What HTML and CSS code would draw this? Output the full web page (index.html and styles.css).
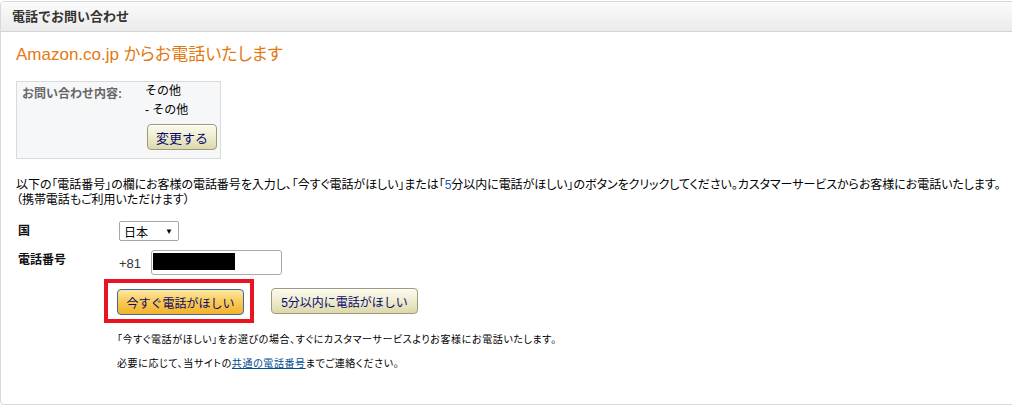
FILE: index.html
```html
<!DOCTYPE html>
<html lang="ja">
<head>
    <meta charset="UTF-8">
    <title>電話でお問い合わせ</title>
    <link rel="stylesheet" href="styles.css">
</head>
<body>
    <div class="box">
        <!-- ヘッダー -->
        <div class="box-header">電話でお問い合わせ</div>

        <div class="box-body">
            <h1 class="title">Amazon.co.jp からお電話いたします</h1>

            <!-- お問い合わせ内容 -->
            <div class="inquiry">
                <div class="inquiry-label">お問い合わせ内容:</div>
                <div class="inquiry-value">
                    <div class="value-line">その他</div>
                    <div class="value-line">- その他</div>
                    <button class="btn btn-cream btn-change">変更する</button>
                </div>
            </div>

            <p class="intro">以下の「電話番号」の欄にお客様の電話番号を入力し、「今すぐ電話がほしい」または「<span class="num">5</span>分以内に電話がほしい」のボタンをクリックしてください。カスタマーサービスからお客様にお電話いたします。<br>（携帯電話もご利用いただけます）</p>

            <!-- 入力フォーム -->
            <div class="form-row row-country">
                <div class="form-label">国</div>
                <div class="form-field">
                    <div class="select">日本<span class="arrow">▼</span></div>
                </div>
            </div>
            <div class="form-row row-phone">
                <div class="form-label">電話番号</div>
                <div class="form-field phone-field">
                    <span class="prefix">+81</span>
                    <div class="phone-input"><span class="redact"></span></div>
                </div>
            </div>

            <div class="buttons">
                <div class="highlight">
                    <button class="btn btn-yellow">今すぐ電話がほしい</button>
                </div>
                <button class="btn btn-cream btn-later">5分以内に電話がほしい</button>
            </div>

            <p class="note">「今すぐ電話がほしい」をお選びの場合、すぐにカスタマーサービスよりお客様にお電話いたします。</p>
            <p class="note">必要に応じて、当サイトの<a href="#" class="link">共通の電話番号</a>までご連絡ください。</p>
        </div>
    </div>
</body>
</html>
```

FILE: styles.css
```css
html, body {
    margin: 0;
    padding: 0;
    overflow: hidden; /* 右端は画面外 */
}

body {
    font-family: "Liberation Sans", "Noto Sans CJK JP", sans-serif;
    font-size: 12px;
    color: #000;
    background: #fff;
}

.box {
    width: 1040px;
    height: 404px;
    box-sizing: border-box;
    margin-top: 1px;
    border: 1px solid #d9d9d9;
    border-radius: 4px;
    overflow: hidden;
}

.box-header {
    height: 29px;
    line-height: 29px;
    padding-left: 11px;
    font-size: 13px;
    font-weight: bold;
    color: #333;
    background: linear-gradient(#fbfbfb, #ebebeb);
    border-bottom: 1px solid #d4d4d4;
}

.box-body {
    padding: 11px 0 0 15px;
}

.title {
    margin: 0;
    font-size: 17px;
    font-weight: normal;
    line-height: 24px;
    color: #e47911;
    font-feature-settings: "palt";
}

/* お問い合わせ内容 */
.inquiry {
    display: flex;
    width: 203px;
    height: 76px;
    margin-top: 14px;
    padding: 0;
    background: #f6f7f9;
    border: 1px solid #dadada;
}

.inquiry-label {
    width: 128px;
    padding: 2px 0 0 5px;
    box-sizing: border-box;
    font-weight: bold;
    color: #666;
}

.inquiry-value {
    padding-top: 1px;
}

.value-line {
    height: 19px;
    line-height: 16px;
}

.btn {
    font-family: "Liberation Sans", "Noto Sans CJK JP", sans-serif;
    font-size: 12px;
    color: #0a0a6b;
    height: 26px;
    padding: 0 8px;
    border-radius: 4px;
    cursor: pointer;
}

.btn-cream {
    background: linear-gradient(#fbfaee, #f0eed2 45%, #dcd8ab);
    border: 1px solid #9f9b78;
    box-shadow: inset 0 1px 0 #fff;
}

.btn-change {
    width: 70px;
    margin: 3px 0 0 2px;
    font-size: 13px;
}

.intro {
    margin: 19px 0 0 0;
    line-height: 15px;
    letter-spacing: -0.05px;
    font-feature-settings: "palt";
}

.intro .num {
    color: #1a56b8;
}

/* 入力フォーム */
.form-row {
    display: flex;
}

.form-label {
    width: 103px;
    padding-left: 2px;
    box-sizing: border-box;
    font-weight: bold;
    color: #111;
}

.row-country {
    margin-top: 13px;
    height: 29px;
}

.select {
    display: flex;
    justify-content: space-between;
    align-items: center;
    width: 60px;
    height: 20px;
    box-sizing: border-box;
    padding: 0 5px 0 4px;
    border: 1px solid #a6a6a6;
    border-radius: 2px;
    font-size: 12px;
}

.arrow {
    font-size: 8px;
}

.phone-field {
    display: flex;
    align-items: flex-end;
}

.prefix {
    width: 32px;
    font-size: 13px;
    color: #333;
    line-height: 22px;
}

.phone-input {
    width: 131px;
    height: 25px;
    box-sizing: border-box;
    padding: 2px 0 0 1px;
    border: 1px solid #a9a9a9;
    border-radius: 3px;
}

.redact {
    display: block;
    width: 82px;
    height: 17px;
    background: #000;
}

/* ボタン */
.buttons {
    display: flex;
    align-items: center;
    margin: 4px 0 0 88px;
}

.highlight {
    padding: 6px 6px 4px 9px;
    border: 4px solid #e8141f;
}

.btn-yellow {
    width: 127px;
    background: linear-gradient(#fde9a3, #f9cc5c 45%, #f2b22a);
    border: 1px solid #45659c;
    font-size: 12px;
}

.btn-later {
    width: 147px;
    margin-left: 17px;
}

.note {
    margin: 9px 0 0 101px;
    font-size: 10px;
    line-height: 16px;
    letter-spacing: 0.6px;
    font-feature-settings: "palt";
}

.note + .note {
    margin-top: 8px;
}

.link {
    color: #004b91;
    text-decoration: underline;
}
```
